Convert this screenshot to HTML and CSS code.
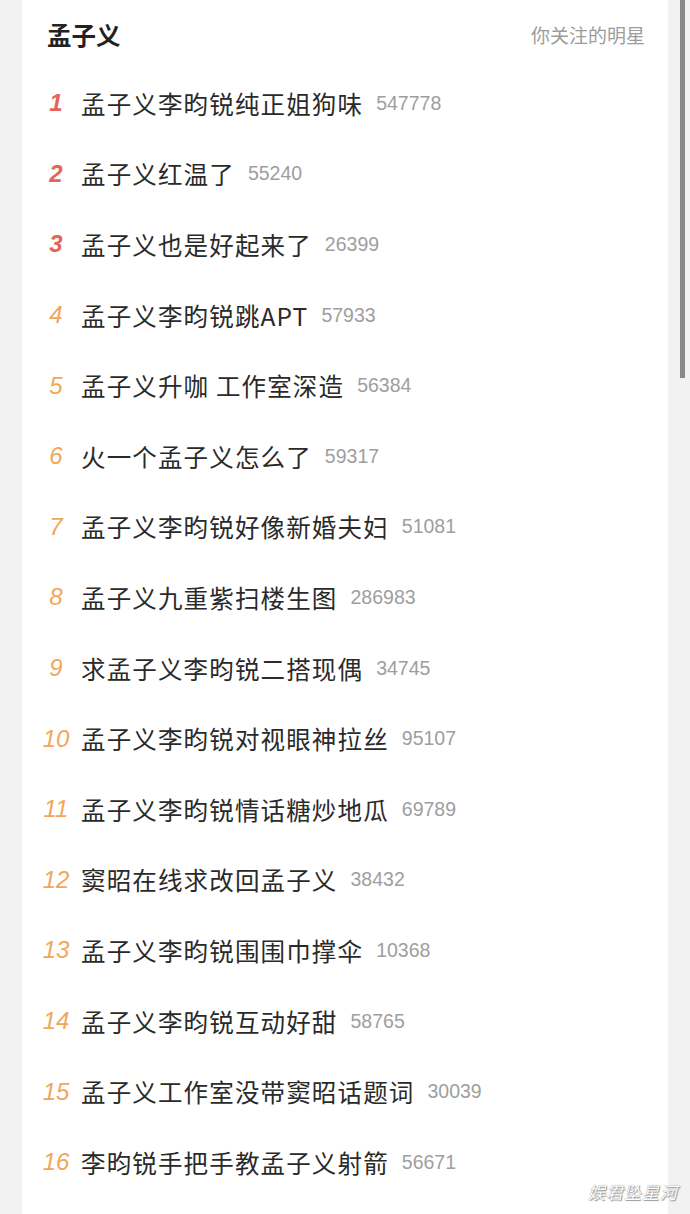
FILE: index.html
```html
<!DOCTYPE html>
<html lang="zh-CN">
<head>
    <meta charset="UTF-8">
    <meta name="viewport" content="width=device-width, initial-scale=1.0">
    <title>孟子义</title>
    <link rel="stylesheet" href="styles.css">
</head>
<body>

<div class="page">
    <div class="card">
        <div class="card-head">
            <h2>孟子义</h2>
            <span class="sub">你关注的明星</span>
        </div>
        <ul class="topics">
            <li><span class="rank top">1</span><span class="title">孟子义李昀锐纯正姐狗味</span><span class="count">547778</span></li>
            <li><span class="rank top">2</span><span class="title">孟子义红温了</span><span class="count">55240</span></li>
            <li><span class="rank top">3</span><span class="title">孟子义也是好起来了</span><span class="count">26399</span></li>
            <li><span class="rank">4</span><span class="title">孟子义李昀锐跳APT</span><span class="count">57933</span></li>
            <li><span class="rank">5</span><span class="title">孟子义升咖 工作室深造</span><span class="count">56384</span></li>
            <li><span class="rank">6</span><span class="title">火一个孟子义怎么了</span><span class="count">59317</span></li>
            <li><span class="rank">7</span><span class="title">孟子义李昀锐好像新婚夫妇</span><span class="count">51081</span></li>
            <li><span class="rank">8</span><span class="title">孟子义九重紫扫楼生图</span><span class="count">286983</span></li>
            <li><span class="rank">9</span><span class="title">求孟子义李昀锐二搭现偶</span><span class="count">34745</span></li>
            <li><span class="rank">10</span><span class="title">孟子义李昀锐对视眼神拉丝</span><span class="count">95107</span></li>
            <li><span class="rank">11</span><span class="title">孟子义李昀锐情话糖炒地瓜</span><span class="count">69789</span></li>
            <li><span class="rank">12</span><span class="title">窦昭在线求改回孟子义</span><span class="count">38432</span></li>
            <li><span class="rank">13</span><span class="title">孟子义李昀锐围围巾撑伞</span><span class="count">10368</span></li>
            <li><span class="rank">14</span><span class="title">孟子义李昀锐互动好甜</span><span class="count">58765</span></li>
            <li><span class="rank">15</span><span class="title">孟子义工作室没带窦昭话题词</span><span class="count">30039</span></li>
            <li><span class="rank">16</span><span class="title">李昀锐手把手教孟子义射箭</span><span class="count">56671</span></li>
        </ul>
    </div>
    <div class="rail"></div>
</div>

<div class="scroll-thumb"></div>
<div class="watermark">娱君坠星河</div>

</body>
</html>
```

FILE: styles.css
```css
body {
    font-family: "Noto Sans CJK SC", "Noto Sans", sans-serif;
    background: #f2f2f2;
    margin: 0;
    padding: 0;
    height: 1214px;
    overflow: hidden;
}
.page {
    display: flex;
    height: 100%;
    padding-left: 22px;
}
.card {
    width: 646px;
    background: #fff;
}
.rail {
    flex: 1;
}
.card-head {
    display: flex;
    justify-content: space-between;
    align-items: center;
    height: 68px;
    padding: 0 23px 0 25px;
}
h2 {
    margin: 0;
    font-size: 24.5px;
    font-weight: bold;
    color: #222;
}
.sub {
    font-size: 19px;
    color: #9c9c9c;
}
.topics {
    list-style: none;
    margin: 0;
    padding: 0;
}
.topics li {
    display: flex;
    align-items: center;
    height: 70.6px;
}
.rank {
    width: 59px;
    padding-left: 9px;
    box-sizing: border-box;
    text-align: center;
    font-family: "Liberation Sans", Arial, sans-serif;
    font-style: italic;
    font-size: 24px;
    color: #f0a75a;
}
.rank.top {
    color: #e5645b;
    font-weight: bold;
}
.title {
    font-size: 24.5px;
    color: #2a2a2a;
    letter-spacing: 1.15px;
}
.count {
    margin-left: 13px;
    font-family: "Liberation Sans", Arial, sans-serif;
    font-size: 19.5px;
    color: #9e9e9e;
}
.scroll-thumb {
    position: absolute;
    top: 0;
    left: 680px;
    width: 5px;
    height: 378px;
    background: #888;
}
.watermark {
    position: absolute;
    right: 12px;
    bottom: 10px;
    font-size: 17px;
    font-style: italic;
    color: #fff;
    letter-spacing: 1px;
    text-shadow: 0 0 1px #777, 1px 1px 1px #999;
}
```
